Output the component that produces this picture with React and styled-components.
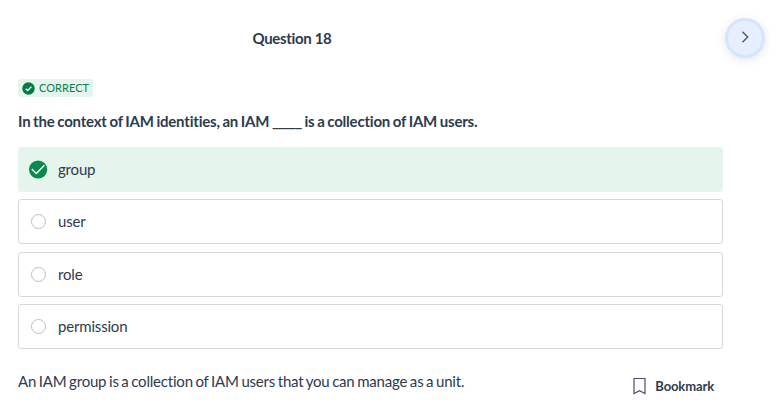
import React from 'react';
import styled, { createGlobalStyle } from 'styled-components';

const GlobalStyle = createGlobalStyle`
  * { box-sizing: border-box; }
  body { margin: 0; background: #fff; color: #2d3b4f; font-family: Lato, sans-serif; font-size: 15px; }
  button { font: inherit; color: inherit; }
`;
const Page = styled.main`
  width: 776px;
  height: 412px;
  padding: 17px 11px 0 18px;
  overflow: hidden;
`;
const Header = styled.header`
  display: flex;
  justify-content: flex-end;
  height: 61px;
`;
const Title = styled.h1`
  width: 548px;
  margin: 12px 159px 0 0;
  flex: 1;
  text-align: center;
  font-size: 15px;
  line-height: 18px;
  font-weight: 700;
  letter-spacing: -0.33px;
`;
const NextButton = styled.button`
  display: grid;
  place-items: center;
  flex: none;
  width: 40px;
  height: 40px;
  margin-top: 0.5px;
  padding: 0 0 1px;
  border: 3px solid #d5e5fe;
  border-radius: 50%;
  background: #e6effe;
  box-shadow: 0 2px 10px rgba(40, 50, 70, 0.12);
`;
const Content = styled.section`
  width: 705px;
`;
const Badge = styled.div`
  display: flex;
  align-items: center;
  gap: 4px;
  width: 75px;
  height: 18px;
  padding-left: 4px;
  margin-top: 1px;
  border-radius: 2px;
  background: #e6f4ee;
  color: #078149;
  font-size: 11px;
  line-height: 14px;
`;
const BadgeText = styled.span`
  margin-top: -1px;
  letter-spacing: 0.05px;
`;
const Prompt = styled.h2`
  margin: 15px 0 16px;
  font-size: 15px;
  line-height: 19px;
  font-weight: 700;
  letter-spacing: -0.2px;
  word-spacing: -0.75px;
  white-space: nowrap;
`;
const Blank = styled.span`
  letter-spacing: -1.2px;
  margin-right: 0.8px;
`;
const Options = styled.div`
  display: grid;
  grid-auto-rows: 45px;
  gap: 7.4px;
`;
const Option = styled.div`
  display: flex;
  align-items: center;
  gap: 10px;
  padding-left: 10px;
  border: 1px solid ${p => (p.$correct ? '#e6f4ee' : '#d7d8de')};
  border-radius: 3px;
  background: ${p => (p.$correct ? '#e6f4ee' : '#fff')};
`;
const OptionLabel = styled.span`
  margin-top: -1.4px;
  letter-spacing: -0.18px;
`;
const Mark = styled.span`
  display: grid;
  place-items: center;
  width: 19px;
  height: 19px;
`;
const Radio = styled.span`
  width: 15px;
  height: 15px;
  border: 1px solid #bbbec8;
  border-radius: 50%;
`;
const Footer = styled.footer`
  display: flex;
  justify-content: space-between;
  margin-top: 23px;
  padding-right: 9px;
`;
const Explanation = styled.p`
  margin: 0;
  line-height: 19px;
  letter-spacing: -0.2px;
  word-spacing: -0.98px;
`;
const Bookmark = styled.button`
  display: flex;
  align-items: center;
  gap: 9.5px;
  height: 20px;
  margin-top: 4px;
  padding: 0;
  border: 0;
  background: none;
  font-size: 13px;
  font-weight: 700;
  letter-spacing: -0.12px;
`;

const Check = ({ size, small }) => (
  <svg width={size} height={size} viewBox="0 0 19 19">
    <circle cx={small ? 9.5 : 9.1} cy="9.5" r="9.1" fill={small ? '#057a44' : '#088a4f'} />
    <path
      d={small ? 'M5.3 9.8 8.2 12.5 13.7 7' : 'M2.8 9 7.3 13.5 15.4 5.2'}
      fill="none" stroke="#fff" strokeWidth={small ? 1.8 : 1.3}
    />
  </svg>
);
const answers = ['group', 'user', 'role', 'permission'];

export default function App() {
  return (
    <Page>
      <GlobalStyle />
      <Header>
        <Title>Question 18</Title>
        <NextButton aria-label="Next question">
          <svg width="14" height="14" viewBox="0 0 14 14"><path d="M4.5 1.8l5.2 5.2-5.2 5.2" fill="none" stroke="#44526a" strokeWidth="1.3" /></svg>
        </NextButton>
      </Header>
      <Content>
        <Badge><Check size={13} small /><BadgeText>CORRECT</BadgeText></Badge>
        <Prompt>In the context of IAM identities, an IAM <Blank>_____</Blank> is a collection of IAM users.</Prompt>
        <Options>
          {answers.map((answer, i) => (
            <Option key={answer} $correct={i === 0}>
              <Mark>{i === 0 ? <Check size={19} /> : <Radio />}</Mark>
              <OptionLabel>{answer}</OptionLabel>
            </Option>
          ))}
        </Options>
        <Footer>
          <Explanation>An IAM group is a collection of IAM users that you can manage as a unit.</Explanation>
          <Bookmark>
            <svg width="13" height="18" viewBox="0 0 13 18"><path d="M1 1.5h11v15L6.5 13.7 1 16.5z" fill="none" stroke="#44526a" strokeWidth="1.2" /></svg>
            Bookmark
          </Bookmark>
        </Footer>
      </Content>
    </Page>
  );
}
